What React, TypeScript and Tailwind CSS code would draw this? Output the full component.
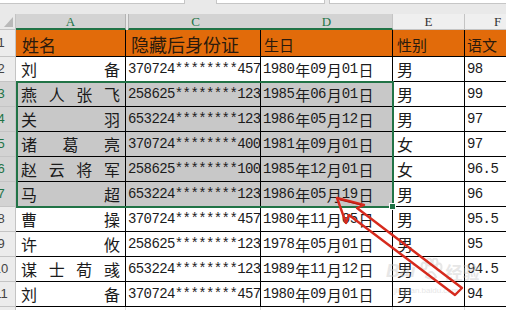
import React from "react";

const rows = [
  ["刘备", "370724********4571", "1980年09月01日", "男", "98"],
  ["燕人张飞", "258625********1231", "1985年06月01日", "男", "99"],
  ["关羽", "653224********1231", "1986年05月12日", "男", "97"],
  ["诸葛亮", "370724********4001", "1981年09月01日", "女", "97"],
  ["赵云将军", "258625********1001", "1985年12月01日", "女", "96.5"],
  ["马超", "653224********1231", "1986年05月19日", "男", "96"],
  ["曹操", "370724********4571", "1980年11月05日", "男", "95.5"],
  ["许攸", "258625********1231", "1978年05月01日", "男", "95"],
  ["谋士荀彧", "653224********1231", "1989年11月12日", "男", "94.5"],
  ["刘备", "370724********4571", "1980年09月01日", "男", "94"],
];

function Mixed({ s }: { s: string }) {
  const parts = s.split(/([\x00-\x7f]+)/).filter(Boolean);
  return (
    <>
      {parts.map((p, i) =>
        /^[\x00-\x7f]+$/.test(p) ? (
          <span key={i} className="font-['Liberation_Mono',monospace] text-[14px] tracking-[-0.6px] pr-[1px]">
            {p}
          </span>
        ) : (
          <span key={i} className="font-['Noto_Sans_CJK_SC',sans-serif] text-[15px]">
            {p}
          </span>
        )
      )}
    </>
  );
}

function RowHead({ n, sel }: { n: number; sel?: boolean }) {
  return (
    <div
      className={`w-[16px] shrink-0 overflow-hidden flex items-center border-r border-b border-[#c4c4c4] font-['Liberation_Sans',sans-serif] text-[13px] ${
        sel ? "bg-[#d3d3d3] text-[#217346]" : "bg-[#ececec] text-[#444]"
      }`}
    >
      <div className="w-[30px] ml-[-14px] shrink-0 text-center">{n}</div>
    </div>
  );
}

export default function App() {
  const cellBase = "shrink-0 flex items-center overflow-hidden whitespace-nowrap leading-none border-r border-b border-black text-[#1b1b1b]";
  return (
    <div className="w-[506px] h-[310px] overflow-hidden relative bg-[#e9e9e9] font-['Noto_Sans_CJK_SC',sans-serif]">
      {/* formula bar bottom */}
      <div className="flex h-[14px] items-start">
        <div className="w-[185px] h-[4px] bg-white border-r border-b border-[#c6c6c6]" />
        <div className="w-[31px]" />
        <div className="w-[109px] h-[4px] bg-white border-x border-b border-[#c6c6c6]" />
        <div className="w-[4px]" />
        <div className="flex-1 h-[4px] bg-white border-l border-b border-[#c6c6c6]" />
      </div>

      {/* column headers */}
      <div className="flex h-[16px] w-[600px] font-['Liberation_Serif',serif] text-[13px] leading-none">
        <div className="w-[16px] shrink-0 relative bg-[#e9e9e9] border-r border-b border-[#c4c4c4]">
          <svg className="absolute left-[4px] top-[3px]" width="9" height="10" viewBox="0 0 9 10">
            <polygon points="9,0 9,10 0,10" fill="#b9b9b9" />
          </svg>
        </div>
        <div className="w-[110px] shrink-0 flex items-center justify-center bg-[#d3d3d3] text-[#217346] border-r border-r-[#b3b3b3] border-b-2 border-b-[#217346]">
          A
        </div>
        <div className="w-[135px] shrink-0 flex items-center justify-center bg-[#d3d3d3] text-[#217346] border-l border-l-[#b3b3b3] border-r border-r-[#c4c4c4] border-b-2 border-b-[#217346] ml-[2px]">
          C
        </div>
        <div className="w-[132px] shrink-0 flex items-center justify-center bg-[#d3d3d3] text-[#217346] border-r border-r-[#c4c4c4] border-b-2 border-b-[#217346] ml-[-2px]">
          D
        </div>
        <div className="w-[72px] shrink-0 flex items-center justify-center bg-[#efefef] text-[#333] border-r border-b border-[#c4c4c4]">
          E
        </div>
        <div className="w-[66px] shrink-0 flex items-center justify-center bg-[#efefef] text-[#333] border-r border-b border-[#c4c4c4]">
          F
        </div>
      </div>

      {/* header row */}
      <div className="flex h-[27px] w-[600px]">
        <RowHead n={1} />
        <div className={`${cellBase} w-[110px] bg-[#e26b0a] pl-[6px] pt-[2px] text-[17px] text-[#2b1a0c]`}>姓名</div>
        <div className={`${cellBase} w-[135px] bg-[#e26b0a] pl-[5px] pt-[2px] text-[18px] text-[#2b1a0c]`}>隐藏后身份证</div>
        <div className={`${cellBase} w-[132px] bg-[#e26b0a] pl-[3px] pt-[2px] text-[15px] text-[#2b1a0c]`}>生日</div>
        <div className={`${cellBase} w-[72px] bg-[#e26b0a] pl-[4px] pt-[2px] text-[15px] text-[#2b1a0c]`}>性别</div>
        <div className={`${cellBase} w-[66px] bg-[#e26b0a] pl-[2px] pt-[2px] text-[15px] text-[#2b1a0c]`}>语文</div>
      </div>

      {rows.map((r, i) => {
        const sel = i >= 1 && i <= 5;
        const bg = sel ? "bg-[#c8c8c8]" : "bg-white";
        return (
          <div key={i} className="flex h-[25px] w-[600px]">
            <RowHead n={i + 2} sel={sel} />
            <div className={`${cellBase} ${bg} w-[110px] justify-between px-[5px] text-[16px]`}>
              {r[0].split("").map((ch, k) => (
                <span key={k}>{ch}</span>
              ))}
            </div>
            <div className={`${cellBase} ${bg} w-[135px] pl-[2px]`}>
              <Mixed s={r[1]} />
            </div>
            <div className={`${cellBase} ${bg} w-[132px] pl-[2px]`}>
              <Mixed s={r[2]} />
            </div>
            <div className={`${cellBase} bg-white w-[72px] pl-[4px] text-[16px]`}>{r[3]}</div>
            <div className={`${cellBase} bg-white w-[66px] pl-[2px]`}>
              <Mixed s={r[4]} />
            </div>
          </div>
        );
      })}

      {/* row 12 */}
      <div className="flex h-[25px] w-[600px]">
        <RowHead n={12} />
        <div className="w-[110px] shrink-0 bg-white border-r border-[#d9d9d9]" />
        <div className="w-[135px] shrink-0 bg-white border-r border-[#d9d9d9]" />
        <div className="w-[132px] shrink-0 bg-white border-r border-[#d9d9d9]" />
        <div className="w-[72px] shrink-0 bg-white border-r border-[#d9d9d9]" />
        <div className="w-[66px] shrink-0 bg-white border-r border-[#d9d9d9]" />
      </div>

      {/* selection A3:D7 */}
      <div className="absolute left-[16px] top-[81px] w-[378px] h-[127px] border-2 border-[#217346] pointer-events-none" />
      <div className="absolute left-[389px] top-[203px] w-[7px] h-[7px] bg-[#217346] border border-white" />

      {/* watermark */}
      <div className="absolute left-[386px] top-[258px] flex items-end gap-[2px] opacity-40 pointer-events-none">
        <span className="font-['Liberation_Sans',sans-serif] font-bold italic text-[19px] leading-none text-[#c4c4c4]">Bai</span>
        <svg width="26" height="22" viewBox="0 0 26 22">
          <g fill="none" stroke="#c4c4c4" strokeWidth="2">
            <ellipse cx="6" cy="8" rx="2.5" ry="3.5" />
            <ellipse cx="11" cy="4" rx="2.5" ry="3.5" />
            <ellipse cx="17" cy="4" rx="2.5" ry="3.5" />
            <ellipse cx="21" cy="9" rx="2.5" ry="3.5" />
            <path d="M8 19 Q13 9 18 19 Q13 22 8 19 Z" />
          </g>
        </svg>
        <span className="font-['Noto_Sans_CJK_SC',sans-serif] font-bold text-[17px] leading-none text-[#c4c4c4]">经验</span>
      </div>
      <div className="absolute left-[394px] top-[287px] font-['Liberation_Sans',sans-serif] text-[8px] leading-none text-[#cfcfcf] opacity-50">
        jingyan.baidu.com
      </div>

      {/* red arrow */}
      <svg className="absolute left-0 top-0 pointer-events-none" width="506" height="310" viewBox="0 0 506 310">
        <polygon
          points="337,198 364,205 357,208 462,288 455,295 349,215 346,223"
          fill="none"
          stroke="#d62a1d"
          strokeWidth="2.4"
          strokeLinejoin="round"
        />
        <line x1="340" y1="200" x2="361" y2="205" stroke="#b51a12" strokeWidth="1" />
      </svg>
    </div>
  );
}
